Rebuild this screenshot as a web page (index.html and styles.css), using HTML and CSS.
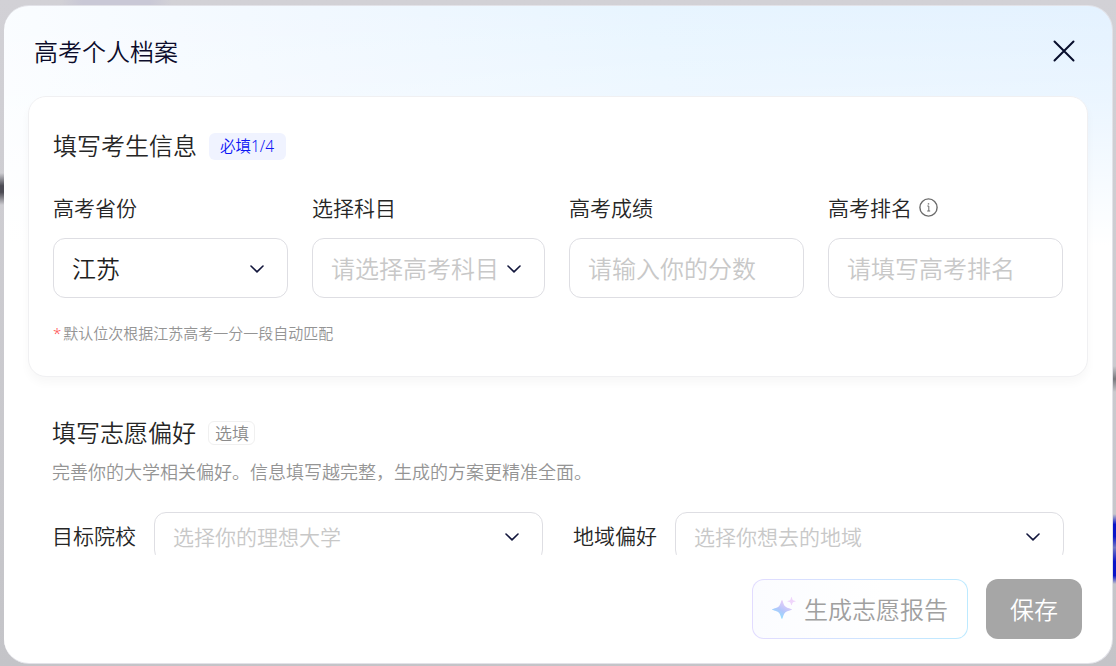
FILE: index.html
```html
<!DOCTYPE html>
<html lang="zh-CN">
<head>
  <meta charset="UTF-8">
  <meta name="viewport" content="width=device-width, initial-scale=1.0">
  <title>高考个人档案</title>
  <link rel="stylesheet" href="styles.css">
</head>
<body>

  <div class="modal">
    <header class="modal-header">
      <h1>高考个人档案</h1>
      <button class="close" aria-label="关闭">
        <svg width="22" height="22" viewBox="0 0 22 22"><path d="M1.5 1.5l19 19M20.5 1.5l-19 19"/></svg>
      </button>
    </header>

    <main class="modal-body">
      <section class="card">
        <div class="title-row">
          <h2>填写考生信息</h2>
          <span class="tag">必填1/4</span>
        </div>

        <div class="fields">
          <div class="field">
            <label>高考省份</label>
            <div class="box filled">
              <span>江苏</span>
              <svg class="arrow" width="14" height="8" viewBox="0 0 14 8"><path d="M1 1l6 5.8L13 1"/></svg>
            </div>
          </div>
          <div class="field">
            <label>选择科目</label>
            <div class="box">
              <span>请选择高考科目</span>
              <svg class="arrow" width="14" height="8" viewBox="0 0 14 8"><path d="M1 1l6 5.8L13 1"/></svg>
            </div>
          </div>
          <div class="field">
            <label>高考成绩</label>
            <div class="box"><span>请输入你的分数</span></div>
          </div>
          <div class="field">
            <label>高考排名
              <svg class="info" width="20" height="20" viewBox="0 0 20 20"><circle cx="10.500" cy="10.500" r="8.600"/><path d="M9.300 9h1.500v5M9.200 14h3"/><path class="dot" d="M9.800 6.200h1.400v1.300H9.800z"/></svg>
            </label>
            <div class="box"><span>请填写高考排名</span></div>
          </div>
        </div>

        <p class="tip"><em>*</em>默认位次根据江苏高考一分一段自动匹配</p>
      </section>

      <section class="prefer">
        <div class="title-row">
          <h2>填写志愿偏好</h2>
          <span class="tag optional">选填</span>
        </div>
        <p class="desc">完善你的大学相关偏好。信息填写越完整，生成的方案更精准全面。</p>

        <div class="prefer-row">
          <div class="inline-field">
            <label>目标院校</label>
            <div class="box">
              <span>选择你的理想大学</span>
              <svg class="arrow" width="14" height="8" viewBox="0 0 14 8"><path d="M1 1l6 5.8L13 1"/></svg>
            </div>
          </div>
          <div class="inline-field">
            <label>地域偏好</label>
            <div class="box">
              <span>选择你想去的地域</span>
              <svg class="arrow" width="14" height="8" viewBox="0 0 14 8"><path d="M1 1l6 5.8L13 1"/></svg>
            </div>
          </div>
        </div>
      </section>
    </main>

    <footer class="modal-footer">
      <button class="btn report">
        <svg width="24" height="24" viewBox="0 0 24 24">
          <defs>
            <linearGradient id="star" x1="0.2" y1="1" x2="0.8" y2="0">
              <stop offset="0.1" stop-color="#8fe0ff"/>
              <stop offset="0.45" stop-color="#b3c6fb"/>
              <stop offset="0.85" stop-color="#e6ccf8"/>
            </linearGradient>
          </defs>
          <path fill="url(#star)" d="M10 3c.8 0 1.300 4.600 3 6.300S20 12 20 12.600s-5.200 1.400-7 3.200S10.800 22 10 22s-1.300-4.400-3.100-6.200S0 13.200 0 12.600s5.100-1.500 6.900-3.300S9.200 3 10 3z"/>
          <path fill="#efd5fb" d="M19.500 0c.5 0 .6 2.200 1.300 2.900s3 .8 3 1.300-2.300.6-3 1.300-.8 2.700-1.300 2.700-.6-2-1.300-2.700-2.900-.8-2.900-1.300 2.200-.6 2.900-1.300S19 0 19.500 0z"/>
        </svg>
        <span>生成志愿报告</span>
      </button>
      <button class="btn save"><span>保存</span></button>
    </footer>
  </div>

</body>
</html>
```
FILE: styles.css
```css
* { box-sizing: border-box; }

body {
  margin: 0;
  height: 666px;
  padding: 5px 3px 2px 4px;
  overflow: hidden;
  font-family: "Noto Sans", "Noto Sans CJK SC", sans-serif;
  font-weight: 350;
  color: #262626;
  /* blurred bits of the page behind the modal */
  background:
    linear-gradient(transparent, #4c4b54 40%, #4c4b54 60%, transparent) 0 173px / 4px 32px no-repeat,
    linear-gradient(transparent, #77777c 50%, transparent) 1112px 366px / 4px 26px no-repeat,
    linear-gradient(transparent, #0a14c8 15%, #0a14c8 32%, #7377c4 48%, #0a14c8 68%, #0a14c8 88%, transparent) 1112px 514px / 4px 70px no-repeat,
    linear-gradient(90deg, transparent, #c9c8d6 20%, #c9c8d6 80%, transparent) 60px 0 / 112px 6px no-repeat,
    linear-gradient(#d2d1d6, #c4c4c8);
}

h1, h2, p { margin: 0; font-weight: inherit; }
button { font-family: inherit; font-weight: inherit; padding: 0; cursor: pointer; }

.modal {
  display: flex;
  flex-direction: column;
  height: 659px;
  border: 1px solid #e2e2e8;
  border-width: 1px 1px 1px 0;
  border-radius: 25px;
  overflow: hidden;
  background:
    linear-gradient(rgba(255,255,255,0), rgba(255,255,255,0.25) 90px, #fff 240px),
    linear-gradient(80deg, #fdfeff 0%, #f1f8ff 35%, #e8f5ff 62%, #e4f2ff 100%);
}

.modal-header {
  display: flex;
  flex: none;
  align-items: center;
  justify-content: space-between;
  height: 90px;
  padding: 0 37px 0 30px;
}
.modal-header h1 { padding-top: 1px; font-size: 24px; line-height: 36px; color: #0c0c2b; }
.close { display: flex; border: none; background: none; }
.close svg { fill: none; stroke: #070d2c; stroke-width: 2; stroke-linecap: round; }

.modal-body { flex: none; height: 459px; padding: 0 24px; overflow: hidden; }

.card {
  height: 281px;
  padding: 31px 24px 0;
  border: 1px solid #f0f0f2;
  border-radius: 18px;
  background: #fff;
  box-shadow: 0 6px 10px rgba(0,0,0,0.03);
}

.title-row { display: flex; align-items: center; gap: 12px; }
.title-row h2 { font-size: 24px; line-height: 36px; }
.tag {
  height: 27px;
  padding: 0 12px 0 11px;
  border-radius: 6px;
  background: #f0f3ff;
  color: #0d16f5;
  font-size: 15.5px;
  line-height: 27px;
}
.tag.optional {
  height: 24px;
  padding: 0 5px 0 6px;
  border: 1px solid #f0f0f0;
  background: #fff;
  color: #8c8c8c;
  font-size: 17px;
  line-height: 24px;
}

.fields {
  display: grid;
  grid-template-columns: 235px 233px 235px 235px;
  gap: 24px;
  margin-top: 27px;
}
.field label { display: flex; align-items: center; gap: 6px; height: 32px; font-size: 21px; }
.info { fill: none; stroke: #6b6b6b; stroke-width: 1.4; }
.info path { stroke-width: 1; }
.info .dot { fill: #6b6b6b; stroke: none; }

.box {
  display: flex;
  align-items: center;
  justify-content: space-between;
  height: 60px;
  padding: 0 23px 0 18px;
  border: 1px solid #dedee3;
  border-radius: 12px;
  background: #fff;
  color: #c8c8c8;
  font-size: 24px;
  white-space: nowrap;
}
.box span { padding-bottom: 2px; }
.field .box { margin-top: 15px; }
.field .arrow { margin-top: 2px; }
.box.filled { color: #1f1f1f; }
.arrow { flex: none; fill: none; stroke: #12163c; stroke-width: 1.6; stroke-linecap: round; stroke-linejoin: round; }

.tip { margin-top: 23px; font-size: 15px; line-height: 24px; color: #949494; }
.tip em { margin-right: 2px; font-style: normal; color: #ff4d4f; }

.prefer { padding: 38px 24px 0 24px; }
.desc { margin-top: 7px; font-size: 18px; line-height: 28px; color: #949494; }

.prefer-row { display: flex; justify-content: space-between; margin-top: 26px; }
.inline-field { display: flex; gap: 18px; }
.inline-field label { font-size: 21px; line-height: 48px; }
.inline-field .box { width: 389px; height: 50px; font-size: 21px; }
.inline-field .box span { padding-bottom: 3px; }

.modal-footer {
  display: flex;
  justify-content: flex-end;
  gap: 18px;
  padding: 24px 30px 0 0;
}
.btn {
  display: flex;
  align-items: center;
  justify-content: center;
  height: 60px;
  border-radius: 12px;
  font-size: 24px;
}
.btn span { padding-bottom: 2px; }
.report {
  gap: 8px;
  width: 216px;
  border: 1px solid transparent;
  background:
    linear-gradient(90deg, #fbfcff, #fff 60%) padding-box,
    linear-gradient(90deg, #e2dcff, #bdeaff) border-box;
  color: #a0a0a0;
}
.save { width: 96px; border: none; background: #a6a6a6; color: #fff; }
```
